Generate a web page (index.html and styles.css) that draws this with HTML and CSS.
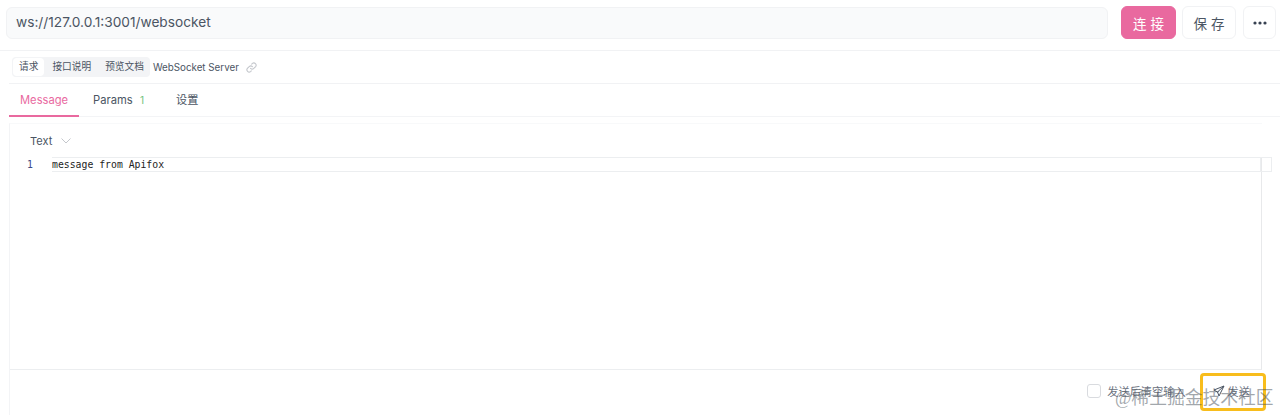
FILE: index.html
```html
<!DOCTYPE html>
<html lang="en">
<head>
    <meta charset="UTF-8">
    <meta name="viewport" content="width=device-width, initial-scale=1.0">
    <title>WebSocket Server</title>
    <link rel="stylesheet" href="styles.css">
</head>
<body>

    <div class="url-bar">
        <div class="url-input">ws://127.0.0.1:3001/websocket</div>
        <button type="button" class="btn btn-connect">连 接</button>
        <button type="button" class="btn btn-save">保 存</button>
        <button type="button" class="btn btn-more">
            <svg width="14" height="4" viewBox="0 0 14 4"><circle cx="2" cy="2" r="1.6"/><circle cx="7" cy="2" r="1.6"/><circle cx="12" cy="2" r="1.6"/></svg>
        </button>
    </div>

    <div class="doc-bar">
        <div class="segmented">
            <span class="segment active">请求</span>
            <span class="segment">接口说明</span>
            <span class="segment">预览文档</span>
        </div>
        <span class="doc-name">WebSocket Server</span>
        <svg class="link-icon" width="11" height="11" viewBox="0 0 24 24" fill="none" stroke="#c4c7cc" stroke-width="2.4" stroke-linecap="round">
            <path d="M10 14a5 5 0 0 0 7 0l4-4a5 5 0 0 0-7-7l-1.500 1.500"/>
            <path d="M14 10a5 5 0 0 0-7 0l-4 4a5 5 0 0 0 7 7l1.500-1.500"/>
        </svg>
    </div>

    <div class="tabs">
        <div class="tab tab-message">Message</div>
        <div class="tab tab-params">Params <span class="count">1</span></div>
        <div class="tab">设置</div>
    </div>

    <div class="panel">
        <div class="format">
            Text
            <svg width="10" height="6" viewBox="0 0 10 6" fill="none" stroke="#c4c7cc" stroke-width="1"><path d="M.5.5 5 5 9.500.5"/></svg>
        </div>
        <div class="editor">
            <div class="editor-line">
                <span class="line-no">1</span>
                <span class="line-text">message from Apifox</span>
                <span class="scroll-box"></span>
            </div>
        </div>
        <div class="footer">
            <label class="clear-check"><span class="checkbox"></span>发送后清空输入</label>
            <div class="send">
                <svg width="12" height="12" viewBox="0 0 24 24" fill="none" stroke="#4b5563" stroke-width="2" stroke-linejoin="round"><path d="M22 2 2 10l7 4 3 8zM9 14 22 2"/></svg>
                发送
            </div>
        </div>
    </div>

    <div class="highlight"></div>
    <div class="watermark">@稀土掘金技术社区</div>

</body>
</html>
```

FILE: styles.css
```css
body {
    font-family: Inter, "Noto Sans CJK SC", sans-serif;
    background-color: #fff;
    color: #4b5563;
    margin: 0;
    padding: 0;
    height: 415px;
    overflow: hidden;
}
.url-bar {
    display: flex;
    align-items: center;
    height: 51px;
    box-sizing: border-box;
    padding: 0 4px 5px 6px;
    border-bottom: 1px solid #f1f2f4;
}
.url-input {
    flex: 1;
    height: 32px;
    line-height: 29px;
    box-sizing: border-box;
    padding-left: 9px;
    margin-right: 13px;
    font-size: 13.700px;
    background-color: #f9fafb;
    border: 1px solid #f1f2f4;
    border-radius: 6px;
}
.btn {
    height: 33px;
    font-family: inherit;
    font-size: 13.500px;
    border-radius: 6px;
    border: 1px solid #f1f2f4;
    background-color: #fff;
    color: #4b5563;
    padding: 0;
}
.btn-connect {
    width: 55px;
    margin-right: 6px;
    background-color: #e9699f;
    border-color: #e9699f;
    color: #fff;
}
.btn-save {
    width: 54px;
    margin-right: 7px;
}
.btn-more {
    display: flex;
    align-items: center;
    justify-content: center;
    width: 33px;
    fill: #374151;
}
.doc-bar {
    display: flex;
    align-items: center;
    height: 33px;
    box-sizing: border-box;
    margin-left: 9px;
    padding-left: 3px;
    border-bottom: 1px solid #f1f2f4;
    font-size: 9.700px;
}
.segmented {
    display: flex;
    background-color: #f3f4f6;
    border-radius: 4px;
    padding: 1px 0;
}
.segment {
    padding: 0 6px;
    height: 18px;
    line-height: 17px;
    margin-right: 2px;
    border-radius: 4px;
}
.segment:first-child {
    margin-left: 1px;
}
.segment:last-child {
    margin-right: 0;
}
.segment.active {
    background-color: #fff;
}
.doc-name {
    margin-left: 3px;
    font-size: 9.800px;
}
.link-icon {
    margin-left: 7px;
}
.tabs {
    display: flex;
    height: 33px;
    margin-left: 9px;
    box-sizing: border-box;
    border-bottom: 1px solid #f3f4f6;
    font-size: 11.200px;
}
.tab {
    padding: 0 11px;
    line-height: 33px;
    height: 33px;
    box-sizing: border-box;
}
.tab-message {
    color: #e9699f;
    border-bottom: 2px solid #e9699f;
    margin-right: 3px;
}
.tab-params {
    margin-right: 4px;
}
.count {
    color: #6fbf7b;
    font-size: 10px;
    margin-left: 4px;
    margin-right: 6px;
}
.panel {
    margin: 6px 0 0 9px;
    width: 1253px;
    height: 292px;
    box-sizing: border-box;
    border-left: 1px solid #f3f4f6;
    border-top: 1px solid #f8f9fa;
    position: relative;
}
.format {
    display: flex;
    align-items: center;
    gap: 9px;
    height: 33px;
    padding-left: 20px;
    font-size: 11px;
}
.editor {
    height: 213px;
    border-right: 1px solid #e8e9eb;
    border-bottom: 1px solid #eceef0;
    box-sizing: border-box;
}
.editor-line {
    display: flex;
    align-items: center;
    height: 15px;
    font-family: "DejaVu Sans Mono", monospace;
    font-size: 9.800px;
    color: #222;
    position: relative;
}
.line-no {
    width: 42px;
    box-sizing: border-box;
    padding-left: 17px;
    color: #3b4a86;
}
.line-text {
    flex: 1;
    height: 15px;
    line-height: 13px;
    box-sizing: border-box;
    border-top: 1px solid #eceef0;
    border-bottom: 1px solid #eceef0;
}
.scroll-box {
    position: absolute;
    right: -11px;
    top: 0;
    width: 10px;
    height: 13px;
    border: 1px solid #eceef0;
}
.footer {
    display: flex;
    align-items: center;
    justify-content: flex-end;
    height: 41px;
    font-size: 11.200px;
    color: #6b7280;
}
.clear-check {
    display: flex;
    align-items: center;
    gap: 6px;
    margin-right: 27px;
}
.checkbox {
    width: 12px;
    height: 12px;
    border: 1px solid #d9dbdf;
    border-radius: 3px;
}
.send {
    display: flex;
    align-items: center;
    gap: 3px;
    margin-right: 12px;
}
.highlight {
    position: absolute;
    left: 1200px;
    top: 373px;
    width: 66px;
    height: 38px;
    box-sizing: border-box;
    border: 3px solid #f8bd1c;
    border-radius: 4px;
}
.watermark {
    position: absolute;
    left: 1115px;
    top: 386px;
    font-family: "Liberation Serif", "Noto Sans CJK SC", serif;
    font-size: 17.800px;
    line-height: 24px;
    color: rgba(70, 80, 90, 0.5);
    white-space: nowrap;
}
```
